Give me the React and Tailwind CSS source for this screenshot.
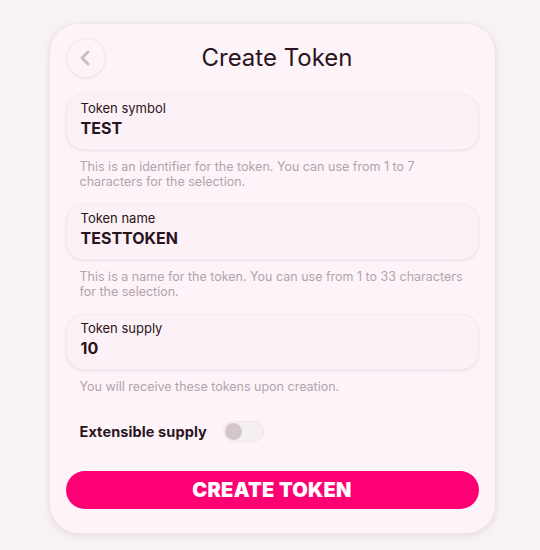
import { ChevronLeft } from "lucide-react";

function Field({ label, value, help }) {
  return (
    <div>
      <div className="h-[56px] rounded-[18px] bg-[#fcf1f6] border border-[#f8e9f0] shadow-[0_1px_3px_rgba(120,60,90,0.12)] px-[14px] pt-[4px]">
        <div className="text-[13px] leading-[18px] text-[#2a1420]">{label}</div>
        <div className="text-[16px] leading-[22px] font-bold text-[#2a1420]">{value}</div>
      </div>
      <p className="px-[14px] mt-[9px] text-[12.5px] leading-[15px] text-[#b3a3ab]">{help}</p>
    </div>
  );
}

export default function App() {
  return (
    <div
      className="min-h-[550px] bg-[#f7f2f3] pt-[23px] flex justify-center"
      style={{ fontFamily: "Inter, 'Noto Sans', sans-serif" }}
    >
      <div className="w-[447px] h-[511px] ml-[4px] rounded-[30px] bg-[#fdf4f9] border border-[#f1e6eb] shadow-[0_2px_6px_rgba(120,80,100,0.12)] px-[16px] pt-[14px]">
        <div className="relative flex items-center justify-center h-[40px]">
          <button className="absolute left-0 top-0 w-[40px] h-[40px] rounded-full border border-[#f3e5ec] bg-[#fdf4f9] shadow-[0_1px_2px_rgba(120,80,100,0.08)] flex items-center justify-center">
            <ChevronLeft size={24} strokeWidth={3} className="text-[#c9bfc4] -ml-[2px]" />
          </button>
          <h1 className="text-[24px] text-[#2a1420] ml-[10px]">Create Token</h1>
        </div>

        <div className="mt-[16px] flex flex-col gap-[15px]">
          <Field
            label="Token symbol"
            value="TEST"
            help="This is an identifier for the token. You can use from 1 to 7 characters for the selection."
          />
          <Field
            label="Token name"
            value="TESTTOKEN"
            help="This is a name for the token. You can use from 1 to 33 characters for the selection."
          />
          <Field
            label="Token supply"
            value="10"
            help="You will receive these tokens upon creation."
          />
        </div>

        <div className="mt-[27px] px-[14px] flex items-center gap-[16px]">
          <span className="text-[14.5px] font-bold tracking-[0.1px] text-[#2a1420]">Extensible supply</span>
          <div className="w-[41px] h-[21px] rounded-full bg-[#f6eff2] border border-[#f3e6ec] flex items-center px-[1px]">
            <div className="w-[17px] h-[17px] rounded-full bg-[#d3c7cd]" />
          </div>
        </div>

        <button className="mt-[28px] w-full h-[38px] rounded-full bg-[#ff0074] text-white text-[20px] font-black tracking-[0.3px]">
          CREATE TOKEN
        </button>
      </div>
    </div>
  );
}
